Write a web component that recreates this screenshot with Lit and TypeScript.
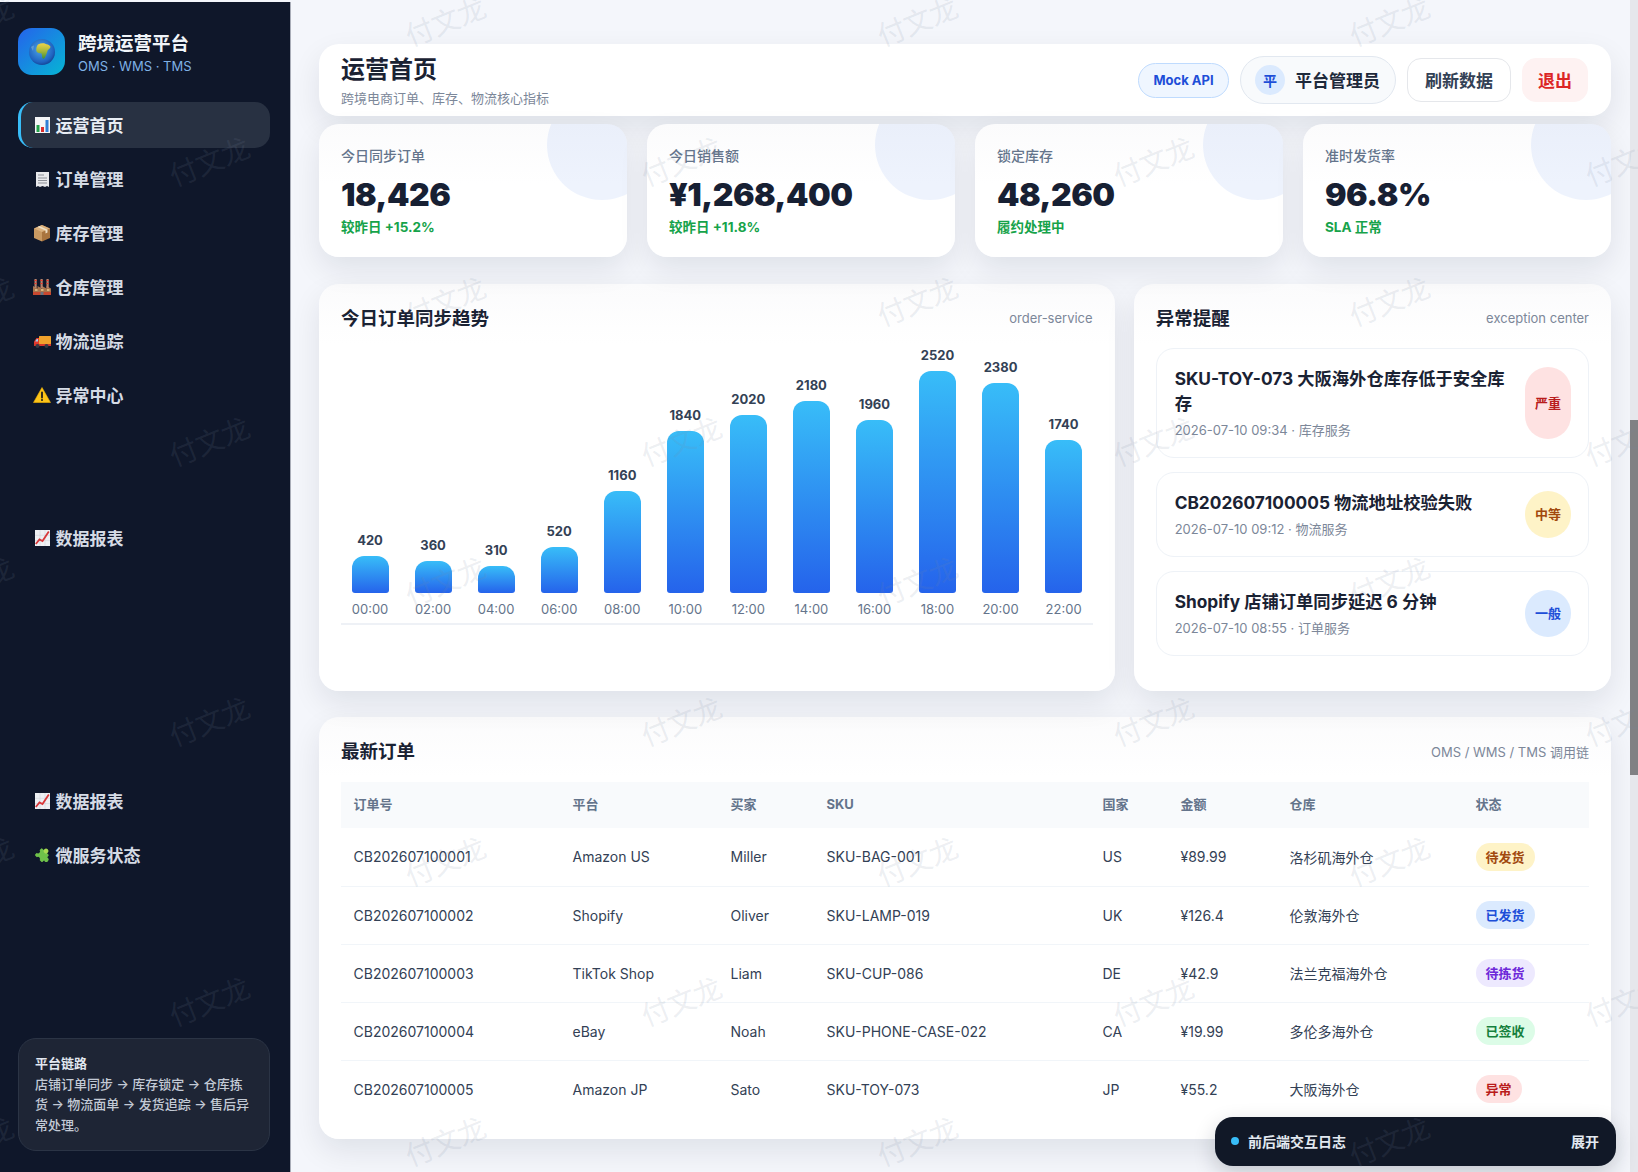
import { LitElement, html, css, svg } from "lit";
import { customElement } from "lit/decorators.js";

const icons: Record<string, unknown> = {
  chart: svg`<rect x="2" y="1" width="15" height="16" fill="#f4f5f7"/><rect x="3.500" y="9" width="3" height="7" fill="#22a34a"/><rect x="8" y="11" width="3" height="5" fill="#d92d2d"/><rect x="12.500" y="4" width="3" height="12" fill="#2f7fd6"/>`,
  receipt: svg`<path d="M3 2h13v15l-2-1-2 1-2.500-1-2.500 1-2-1-2 1z" fill="#e8e9ec"/><path d="M5 5h6M5 8h9M5 10.500h9M5 13h9" stroke="#8d9097" stroke-width="1"/>`,
  box: svg`<path d="M9 1 17 4.500v9.500L9 17.500z" fill="#a9753f"/><path d="M9 1 1 4.500v9.500l8 3.500z" fill="#c99a62"/><path d="M1 4.500 9 8l8-3.500L9 1z" fill="#dcb27f"/><path d="M4.500 3 12.500 6.500v3l2-.9V5.700L6.500 2.100z" fill="#efe0c6"/>`,
  factory: svg`<path d="M0 17V8l4.500 2.500V8l4.500 2.500V8l4.500 2.500V8l4.500 2.500V17z" fill="#a8744d"/><rect x="1.500" y="1" width="2.200" height="9" fill="#b9826a"/><rect x="7.500" y="1" width="2.200" height="9" fill="#b9826a"/><rect x="13.500" y="1" width="2.200" height="9" fill="#b9826a"/><path d="M1.500 2.500h2.200M7.500 2.500h2.200M13.500 2.500h2.200M1.500 5.500h2.200M7.500 5.500h2.200M13.500 5.500h2.200" stroke="#e5392f" stroke-width="1.200"/><rect x="0" y="14" width="18" height="3" fill="#c9482f"/><path d="M2 12h2.500M8 12h2.500M14 12h2.500" stroke="#e7c98f" stroke-width="1.500"/><rect x="7.500" y="14" width="3" height="3" fill="#6a7480"/>`,
  truck: svg`<rect x="6" y="4" width="12" height="8" rx=".5" fill="#f0a22c"/><path d="M6 6H3.500L1 9.500V13h5z" fill="#e23a2e"/><path d="M5 7H3.800L2.200 9.500H5z" fill="#9fd1ee"/><rect x="1" y="12" width="17" height="2" fill="#d6352a"/><circle cx="4.500" cy="14" r="2" fill="#333a44"/><circle cx="13.500" cy="14" r="2" fill="#333a44"/>`,
  warn: svg`<path d="M9 1.500 17.500 16.500H.5z" fill="#fcc419" stroke="#f4b400" stroke-width=".6" stroke-linejoin="round"/><path d="M9 6.500v5" stroke="#1d1d1d" stroke-width="1.800" stroke-linecap="round"/><circle cx="9" cy="14" r="1" fill="#1d1d1d"/>`,
  report: svg`<rect x="2" y="1" width="15" height="16" fill="#eef0f3"/><path d="M2 6.300h15M2 11.600h15M7 1v16M12 1v16" stroke="#c9ced6" stroke-width=".5"/><path d="M2.800 15 6.500 10.500 9.500 12 15.800 2.500" fill="none" stroke="#d8383a" stroke-width="1.800"/>`,
  puzzle: svg`<g transform="rotate(45 9 9)"><rect x="3.800" y="4.200" width="10.400" height="10" rx="1" fill="#6fc24a"/><circle cx="9" cy="3.300" r="2.400" fill="#a9db52"/><circle cx="15.200" cy="9.200" r="2.400" fill="#6fc24a"/><circle cx="9" cy="14.600" r="2" fill="#0f172a"/><circle cx="3.600" cy="9.200" r="2" fill="#0f172a"/></g>`,
};

const nav = [
  ["chart", "运营首页", "on"],
  ["receipt", "订单管理", ""],
  ["box", "库存管理", ""],
  ["factory", "仓库管理", ""],
  ["truck", "物流追踪", ""],
  ["warn", "异常中心", ""],
  ["report", "数据报表", "gap-a"],
  ["report", "数据报表", "gap-b"],
  ["puzzle", "微服务状态", ""],
];

const kpis = [
  ["今日同步订单", "18,426", "较昨日 +15.2%"],
  ["今日销售额", "¥1,268,400", "较昨日 +11.8%"],
  ["锁定库存", "48,260", "履约处理中"],
  ["准时发货率", "96.8%", "SLA 正常"],
];

const bars: [string, number][] = [
  ["00:00", 420], ["02:00", 360], ["04:00", 310], ["06:00", 520], ["08:00", 1160], ["10:00", 1840],
  ["12:00", 2020], ["14:00", 2180], ["16:00", 1960], ["18:00", 2520], ["20:00", 2380], ["22:00", 1740],
];

const alerts = [
  ["SKU-TOY-073 大阪海外仓库存低于安全库存", "2026-07-10 09:34 · 库存服务", "严重", "red"],
  ["CB202607100005 物流地址校验失败", "2026-07-10 09:12 · 物流服务", "中等", "amber"],
  ["Shopify 店铺订单同步延迟 6 分钟", "2026-07-10 08:55 · 订单服务", "一般", "blue"],
];

const columns = ["订单号", "平台", "买家", "SKU", "国家", "金额", "仓库", "状态"];
const orders = [
  ["CB202607100001", "Amazon US", "Miller", "SKU-BAG-001", "US", "¥89.99", "洛杉矶海外仓", "待发货", "amber"],
  ["CB202607100002", "Shopify", "Oliver", "SKU-LAMP-019", "UK", "¥126.4", "伦敦海外仓", "已发货", "blue"],
  ["CB202607100003", "TikTok Shop", "Liam", "SKU-CUP-086", "DE", "¥42.9", "法兰克福海外仓", "待拣货", "violet"],
  ["CB202607100004", "eBay", "Noah", "SKU-PHONE-CASE-022", "CA", "¥19.99", "多伦多海外仓", "已签收", "green"],
  ["CB202607100005", "Amazon JP", "Sato", "SKU-TOY-073", "JP", "¥55.2", "大阪海外仓", "异常", "red"],
];

const marks: [number, number][] = [];
for (let r = 0; r < 5; r++) for (let c = 0; c < 4; c++) marks.push([-26 + 472 * c, 23 + 280 * r]);
for (let r = 0; r < 4; r++) for (let c = 0; c < 4; c++) marks.push([210 + 472 * c, 163 + 280 * r]);

@customElement("app-root")
export class AppRoot extends LitElement {
  static styles = css`
    :host {
      display: block;
      height: 1172px;
      overflow: hidden;
      position: relative;
      background: #f4f6fb;
      font-family: Inter, "Noto Sans CJK SC", "Noto Sans", sans-serif;
      color: #1e293b;
    }
    * { box-sizing: border-box; }
    .layout { display: flex; height: 1172px; }

    .side {
      width: 291px;
      flex: none;
      margin-top: 2px;
      padding: 26px 20px 21px 18px;
      background: #0f172a;
      border-right: 1px solid #a9adb8;
      display: flex;
      flex-direction: column;
    }
    .brand { display: flex; align-items: center; gap: 13px; height: 47px; }
    .logo {
      width: 47px; height: 47px; border-radius: 14px; flex: none;
      background: linear-gradient(135deg, #2563eb, #06b6d4);
      display: flex; align-items: center; justify-content: center;
    }
    .brand-text { padding-top: 2px; }
    .brand-name { font-size: 18.500px; font-weight: 700; line-height: 24px; color: #f1f5f9; white-space: nowrap; }
    .brand-sub { font-size: 13px; line-height: 18px; color: #7fb2e6; margin-top: 2px; white-space: nowrap; }
    .nav { margin-top: 27px; display: flex; flex-direction: column; gap: 8px; }
    .nav-item {
      height: 46px;
      display: flex; align-items: center; gap: 4.500px;
      padding-left: 12px;
      border-left: 3px solid transparent;
      border-radius: 15px;
      font-size: 17px; font-weight: 600; color: #d5dbe5;
    }
    .nav-item span { padding-bottom: 2px; }
    .nav-item svg { flex: none; }
    .nav-item.on { background: #283142; border-left-color: #38bdf8; color: #e8edf4; }
    .nav-item.gap-a { margin-top: 89px; }
    .nav-item.gap-b { margin-top: 209px; }
    .note {
      margin-top: auto;
      height: 113px;
      padding: 14px 16px;
      background: #1e2535;
      border: 1px solid #2b3445;
      border-radius: 18px;
      font-size: 13px; line-height: 20.500px; color: #c3cad5; font-weight: 500;
    }
    .note b { display: block; color: #e2e8f0; font-weight: 700; }

    .main { flex: 1; min-width: 0; padding: 44px 27px 0 28px; }
    .card {
      background: linear-gradient(180deg, #fbfbfc 0, #fff 60px);
      border-radius: 20px;
      box-shadow: 0 12px 30px rgba(15, 23, 42, 0.09);
    }
    .top {
      height: 72px; padding: 0 23px 0 22px;
      display: flex; align-items: center; justify-content: space-between;
      background: #fff;
    }
    .top h1 { margin: 0; font-size: 24px; line-height: 34px; font-weight: 700; color: #1a2233; }
    .top p { margin: 2px 0 0; font-size: 13px; line-height: 18px; color: #7c8799; }
    .actions { display: flex; align-items: center; gap: 11px; }
    .mock {
      width: 91px; height: 35px; border-radius: 999px;
      background: #eff6ff; border: 1px solid #bfdbfe; color: #1d4ed8;
      font-size: 13px; font-weight: 700;
      display: flex; align-items: center; justify-content: center;
    }
    .user {
      width: 156px; height: 48px; border-radius: 999px;
      background: #f8fafc; border: 1px solid #e2e8f0;
      display: flex; align-items: center; gap: 10px; padding-left: 14px;
      font-size: 17px; font-weight: 600; color: #1e293b; white-space: nowrap;
    }
    .user b { font-weight: 600; padding-bottom: 2px; }
    .avatar {
      width: 30px; height: 30px; border-radius: 50%; background: #dbeafe; color: #1d4ed8;
      font-size: 14px; font-weight: 700; flex: none;
      display: flex; align-items: center; justify-content: center;
    }
    .btn {
      height: 44px; padding: 0 17px 2px; border-radius: 14px;
      background: #fff; border: 1px solid #e5e7eb; color: #334155;
      font-size: 17px; font-weight: 600;
      display: flex; align-items: center; white-space: nowrap;
    }
    .btn.exit { background: #fef2f2; border-color: #fef2f2; color: #dc2626; padding: 0 15px 2px; }

    .kpis { margin-top: 8px; display: grid; grid-template-columns: repeat(4, 1fr); gap: 20px; }
    .kpi { height: 133px; padding: 23px 22px; position: relative; overflow: hidden; }
    .kpi::after {
      content: ""; position: absolute; top: -34px; right: -30px;
      width: 110px; height: 110px; border-radius: 50%;
      background: rgba(37, 99, 235, 0.08);
    }
    .kpi-label { font-size: 14px; line-height: 18px; color: #64748b; font-weight: 500; }
    .kpi-value { margin-top: 10px; font-size: 32px; line-height: 40px; font-weight: 900; letter-spacing: -0.5px; color: #172033; white-space: nowrap; }
    .kpi-delta { margin-top: 3px; font-size: 13.500px; line-height: 18px; font-weight: 700; color: #16a34a; }

    .row { margin-top: 27px; display: grid; grid-template-columns: 5fr 3fr; gap: 19px; height: 407px; }
    .panel { padding: 21px 22px 22px; }
    .panel-head { display: flex; align-items: center; justify-content: space-between; height: 24px; }
    .panel-head h2 { margin: 0; font-size: 18.500px; font-weight: 700; color: #1a2233; }
    .panel-head span { font-size: 13px; color: #7c8799; padding-top: 2px; }

    .chart {
      margin-top: 11px; height: 285px;
      display: grid; grid-template-columns: repeat(12, 1fr); gap: 5px;
      align-items: end;
      border-bottom: 2px solid #eef1f6;
      padding-bottom: 5px;
    }
    .col { display: flex; flex-direction: column; align-items: center; }
    .col-value { font-size: 13px; line-height: 18px; font-weight: 700; color: #334155; margin-bottom: 7px; }
    .bar {
      width: 37px; border-radius: 12px 12px 3px 3px;
      background: linear-gradient(180deg, #38bdf8, #2563eb);
    }
    .col-label { margin-top: 7px; font-size: 13px; line-height: 18px; color: #64748b; }

    .alerts { margin-top: 19px; display: flex; flex-direction: column; gap: 14px; }
    .alert {
      display: flex; gap: 14px; padding: 18px 17px 18px 18px;
      border: 1px solid #eef2f7; border-radius: 18px; background: #fff;
    }
    .alert-body { flex: 1; min-width: 0; }
    .alert-title { margin-top: -1px; font-size: 17.300px; line-height: 25px; font-weight: 700; color: #1a2233; }
    .alert-meta { margin-top: 5px; font-size: 13px; line-height: 18px; color: #7c8799; }
    .level {
      width: 46px; flex: none; border-radius: 999px;
      font-size: 13px; font-weight: 700; padding-bottom: 2px;
      display: flex; align-items: center; justify-content: center;
    }
    .red { background: #fee2e2; color: #b91c1c; }
    .amber { background: #fef3c7; color: #a1490e; }
    .blue { background: #dbeafe; color: #1d4ed8; }
    .violet { background: #ede9fe; color: #6d28d9; }
    .green { background: #dcfce7; color: #15803d; }

    .orders { margin-top: 26px; height: 422px; padding: 21px 22px 0; }
    table { margin-top: 20px; width: 100%; border-collapse: collapse; table-layout: fixed; }
    th {
      height: 46px; padding: 0 12.500px 3px; text-align: left; background: #f8fafc;
      font-size: 13px; font-weight: 700; color: #64748b;
    }
    td {
      height: 58px; padding: 0 12.500px; font-size: 14px; color: #334155;
      border-bottom: 1px solid #f1f5f9; white-space: nowrap;
    }
    tr:last-child td { border-bottom: 0; }
    .c0 { width: 219px; } .c1 { width: 158px; } .c2 { width: 96px; } .c3 { width: 276px; }
    .c4 { width: 78px; } .c5 { width: 109px; } .c6 { width: 186px; } .c7 { width: 126px; }
    .pill {
      display: inline-flex; align-items: center; height: 28px; padding: 0 10px 1px;
      border-radius: 999px; font-size: 13px; font-weight: 700;
    }

    .dock {
      position: absolute; left: 1215px; top: 1117px; width: 401px; height: 49px;
      background: #111827; border-radius: 18px;
      box-shadow: 0 8px 22px rgba(15, 23, 42, 0.2);
      display: flex; align-items: center; gap: 9px; padding: 0 17px 2px 16px;
      font-size: 14px; font-weight: 700; color: #e2e8f0;
    }
    .dot { width: 8px; height: 8px; border-radius: 50%; background: #38bdf8; flex: none; }
    .dock em { margin-left: auto; font-style: normal; }

    .track { position: absolute; right: 0; top: 0; width: 8px; height: 1172px; background: #e6e7ec; }
    .thumb { position: absolute; right: 0; top: 420px; width: 8px; height: 355px; background: #808184; }

    .marks { position: absolute; inset: 0; pointer-events: none; }
    .marks text {
      font-family: Inter, "Noto Sans CJK SC", sans-serif;
      font-size: 28px; fill: rgba(120, 135, 160, 0.14); text-anchor: middle;
    }
  `;

  private icon(name: string) {
    return html`<svg width="18" height="18" viewBox="0 0 18 18">${icons[name]}</svg>`;
  }

  render() {
    const max = 2520;
    return html`
      <div class="layout">
        <aside class="side">
          <div class="brand">
            <div class="logo">
              <svg width="28" height="28" viewBox="0 0 28 28">
                <defs>
                  <radialGradient id="g" cx=".45" cy=".4" r=".7">
                    <stop offset="0" stop-color="#4fa8ea" />
                    <stop offset=".7" stop-color="#1f63c0" />
                    <stop offset="1" stop-color="#0e2f78" />
                  </radialGradient>
                  <linearGradient id="l" x1="0" y1="0" x2="0" y2="1">
                    <stop offset="0" stop-color="#efd34a" />
                    <stop offset=".5" stop-color="#a8b83c" />
                    <stop offset="1" stop-color="#3f8f3a" />
                  </linearGradient>
                </defs>
                <circle cx="14" cy="14" r="13" fill="url(#g)" />
                <path d="M10 6.500c2-1.200 4-1.500 6-1.200l2.500 1c1.800.2 3 1 4 2.500-.5 1.800-1.500 2.500-2.700 3.200-.7 2.300-1.600 4.800-3 7.800-.8 1.200-2 1.200-2.500 0-.3-1.800-.3-3.200-.8-4.300-1.800-.4-3.800-.2-5-2C7.800 11 8.800 7.800 10 6.500z" fill="url(#l)" />
                <path d="M3 9c1-1 2-1.500 3-1.500L5 13z" fill="#7fb0d8" opacity=".6" />
              </svg>
            </div>
            <div class="brand-text">
              <div class="brand-name">跨境运营平台</div>
              <div class="brand-sub">OMS · WMS · TMS</div>
            </div>
          </div>
          <nav class="nav">
            ${nav.map(([ic, label, cls]) => html`<div class="nav-item ${cls}">${this.icon(ic)}<span>${label}</span></div>`)}
          </nav>
          <div class="note">
            <b>平台链路</b>
            店铺订单同步 → 库存锁定 → 仓库拣货 → 物流面单 → 发货追踪 → 售后异常处理。
          </div>
        </aside>

        <main class="main">
          <header class="card top">
            <div>
              <h1>运营首页</h1>
              <p>跨境电商订单、库存、物流核心指标</p>
            </div>
            <div class="actions">
              <div class="mock">Mock API</div>
              <div class="user"><span class="avatar">平</span><b>平台管理员</b></div>
              <div class="btn">刷新数据</div>
              <div class="btn exit">退出</div>
            </div>
          </header>

          <section class="kpis">
            ${kpis.map(
              ([l, v, d]) => html`<div class="card kpi">
                <div class="kpi-label">${l}</div>
                <div class="kpi-value">${v}</div>
                <div class="kpi-delta">${d}</div>
              </div>`
            )}
          </section>

          <section class="row">
            <div class="card panel">
              <div class="panel-head"><h2>今日订单同步趋势</h2><span>order-service</span></div>
              <div class="chart">
                ${bars.map(
                  ([t, v]) => html`<div class="col">
                    <div class="col-value">${v}</div>
                    <div class="bar" style="height:${Math.round((v / max) * 222)}px"></div>
                    <div class="col-label">${t}</div>
                  </div>`
                )}
              </div>
            </div>
            <div class="card panel">
              <div class="panel-head"><h2>异常提醒</h2><span>exception center</span></div>
              <div class="alerts">
                ${alerts.map(
                  ([t, m, lv, c]) => html`<div class="alert">
                    <div class="alert-body">
                      <div class="alert-title">${t}</div>
                      <div class="alert-meta">${m}</div>
                    </div>
                    <div class="level ${c}">${lv}</div>
                  </div>`
                )}
              </div>
            </div>
          </section>

          <section class="card orders">
            <div class="panel-head"><h2>最新订单</h2><span>OMS / WMS / TMS 调用链</span></div>
            <table>
              <thead>
                <tr>${columns.map((c, i) => html`<th class="c${i}">${c}</th>`)}</tr>
              </thead>
              <tbody>
                ${orders.map(
                  (o) => html`<tr>
                    ${o.slice(0, 7).map((v) => html`<td>${v}</td>`)}
                    <td><span class="pill ${o[8]}">${o[7]}</span></td>
                  </tr>`
                )}
              </tbody>
            </table>
          </section>
        </main>
      </div>

      <div class="track"></div>
      <div class="thumb"></div>
      <div class="dock"><span class="dot"></span><span>前后端交互日志</span><em>展开</em></div>
      <svg class="marks" width="1638" height="1172">
        ${marks.map(([x, y]) => svg`<text x=${x} y=${y + 9} transform="rotate(-22 ${x} ${y})">付文龙</text>`)}
      </svg>
    `;
  }
}
